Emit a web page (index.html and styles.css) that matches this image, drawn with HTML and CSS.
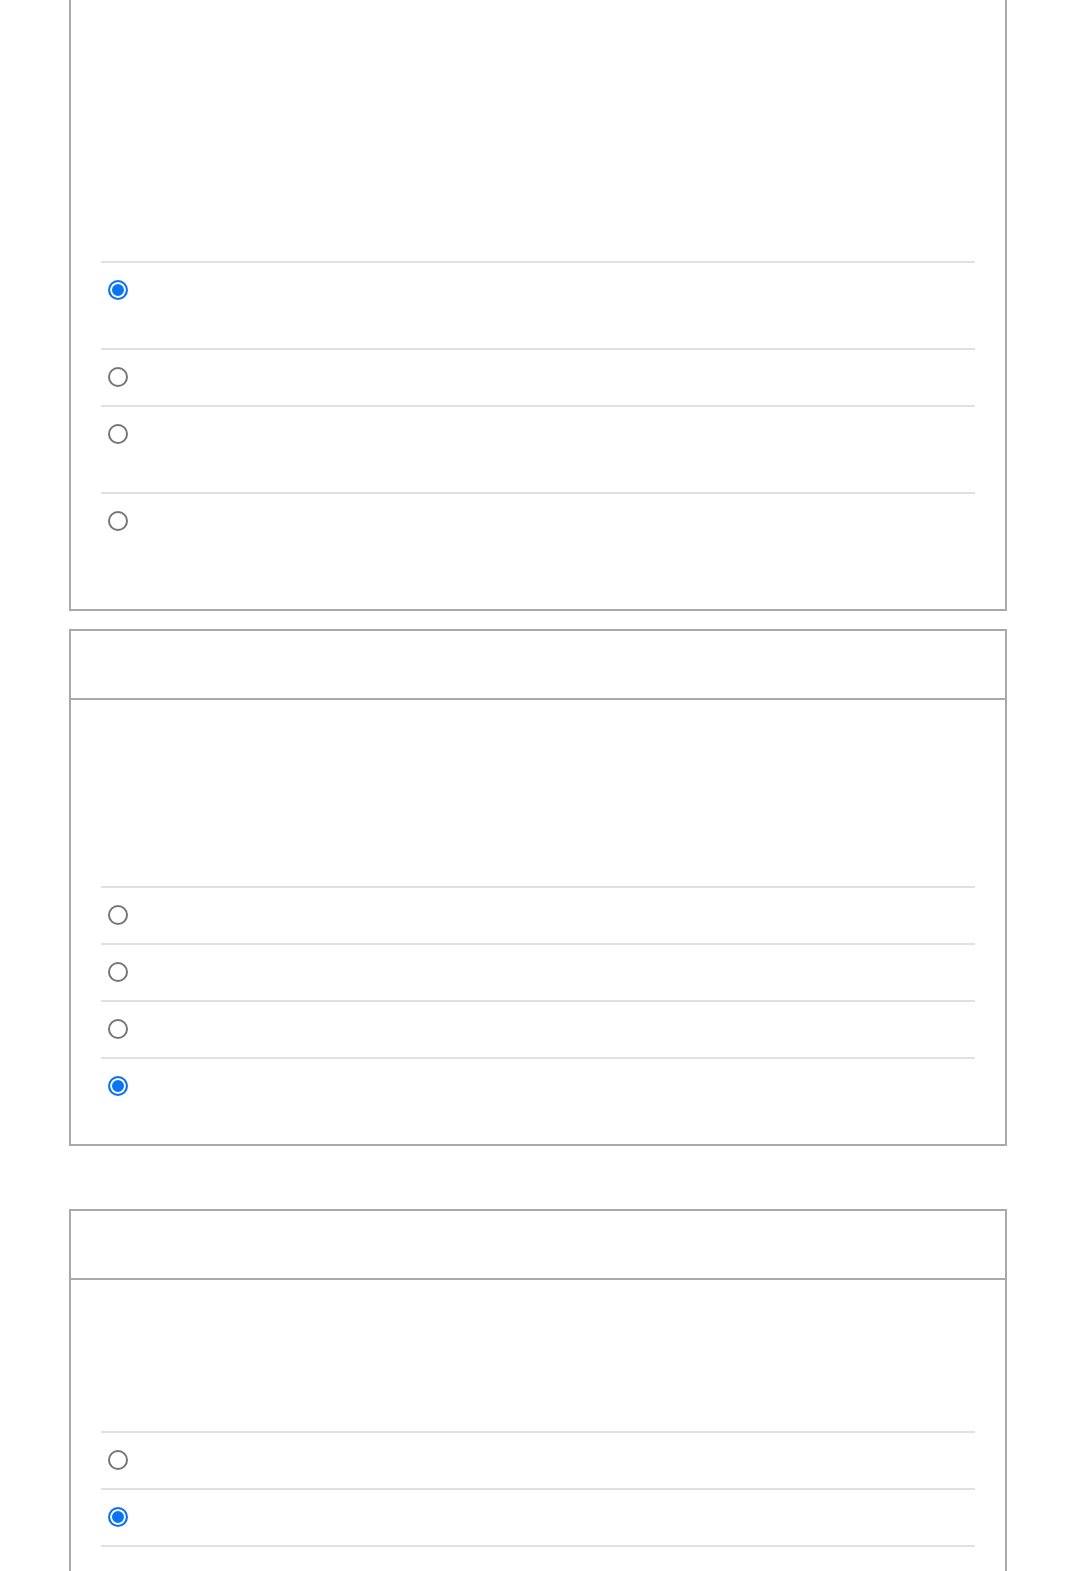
FILE: index.html
```html
<!DOCTYPE html>
<html lang="en">
<head>
<meta charset="utf-8">
<title>Quiz</title>
<link rel="stylesheet" href="styles.css">
</head>
<body>
<main class="page">
  <section class="group">
    <div class="card card--continued">
      <div class="card-body">
        <div class="prompt prompt--tall"></div>
        <div class="options">
          <label class="option option--two-line"><input type="radio" name="q1" checked><span class="option-text"></span></label>
          <label class="option"><input type="radio" name="q1"><span class="option-text"></span></label>
          <label class="option option--two-line"><input type="radio" name="q1"><span class="option-text"></span></label>
          <label class="option option--two-line"><input type="radio" name="q1"><span class="option-text"></span></label>
        </div>
      </div>
    </div>

    <div class="card">
      <div class="card-header"></div>
      <div class="card-body">
        <div class="prompt prompt--medium"></div>
        <div class="options">
          <label class="option"><input type="radio" name="q2"><span class="option-text"></span></label>
          <label class="option"><input type="radio" name="q2"><span class="option-text"></span></label>
          <label class="option"><input type="radio" name="q2"><span class="option-text"></span></label>
          <label class="option"><input type="radio" name="q2" checked><span class="option-text"></span></label>
        </div>
      </div>
    </div>
  </section>

  <section class="group group--next">
    <div class="card">
      <div class="card-header"></div>
      <div class="card-body">
        <div class="prompt prompt--short"></div>
        <div class="options">
          <label class="option"><input type="radio" name="q3"><span class="option-text"></span></label>
          <label class="option"><input type="radio" name="q3" checked><span class="option-text"></span></label>
          <div class="option"><span class="option-text"></span></div>
        </div>
      </div>
    </div>
  </section>
</main>
</body>
</html>
```

FILE: styles.css
```css
* { box-sizing: border-box; }

html, body {
  margin: 0;
  padding: 0;
  background: #ffffff;
  font-family: "Liberation Sans", Arial, sans-serif;
  color: #222;
}

.page {
  width: 938px;
  margin-left: 69px;
}

.group {
  display: flex;
  flex-direction: column;
  gap: 18px;
}

.group--next {
  margin-top: 63px;
}

.card {
  border: 2px solid #a9a9a9;
  background: #ffffff;
}

.card--continued {
  border-top: none;
}

.card-header {
  height: 69px;
  border-bottom: 2px solid #a9a9a9;
}

.card-body {
  padding: 0 30px 30px 30px;
}

.prompt--tall { height: 261px; }
.prompt--medium { height: 186px; }
.prompt--short { height: 151px; }

.options {
  display: flex;
  flex-direction: column;
}

.option {
  display: flex;
  align-items: flex-start;
  gap: 12px;
  padding: 17px 7px 18px 7px;
  border-top: 2px solid #e0e0e0;
}

.option-text {
  flex: 1;
  min-height: 20px;
}

.option--two-line .option-text {
  min-height: 50px;
}

.option input[type="radio"] {
  appearance: none;
  -webkit-appearance: none;
  margin: 0;
  width: 20px;
  height: 20px;
  flex: 0 0 20px;
  border-radius: 50%;
  border: 2px solid #767676;
  background: #ffffff;
}

.option input[type="radio"]:checked {
  border-color: #0b74f5;
  background: #0b74f5;
  box-shadow: inset 0 0 0 2px #ffffff;
}
```
